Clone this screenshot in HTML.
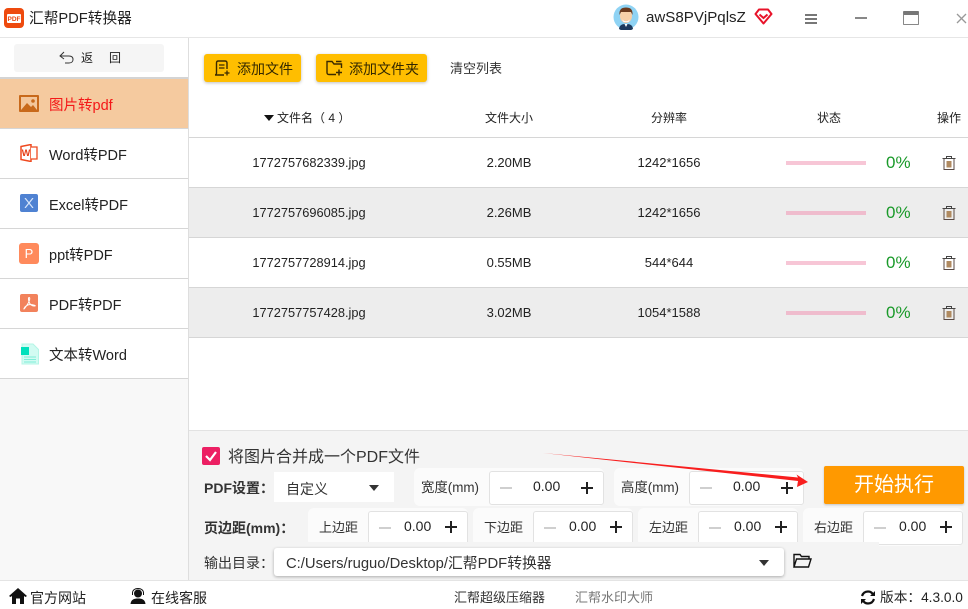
<!DOCTYPE html>
<html><head><meta charset="utf-8"><style>
*{box-sizing:border-box;margin:0;padding:0}
html,body{width:968px;height:609px;overflow:hidden;background:#fff}
body{position:relative;font-family:"Liberation Sans","Noto Sans CJK SC",sans-serif;color:#222;font-size:13px}
.a{position:absolute;white-space:nowrap}
.t{position:absolute;white-space:nowrap;line-height:20px;height:20px}
.c{text-align:center}
.nav{position:absolute;left:49px;font-size:14.5px;line-height:20px;white-space:nowrap}
.line{position:absolute;height:1px;background:#d6d6d6}
.box{position:absolute;background:#fff;border:1px solid #e2e2e2;border-radius:3px}
.wrap{position:absolute;background:#fbfbfb;border-radius:6px}
.val{position:absolute;font-size:14px;line-height:20px;white-space:nowrap;color:#222}
.minus{position:absolute;width:12px;height:2px;background:#cfcfcf}
.plus{position:absolute;width:12px;height:12px}
.plus:before{content:"";position:absolute;left:0;top:5px;width:12px;height:2px;background:#222}
.plus:after{content:"";position:absolute;left:5px;top:0;width:2px;height:12px;background:#222}
.bar{position:absolute;left:786px;width:80px;height:4px;background:#f7c6d6}
.pct{position:absolute;left:886px;font-size:17px;color:#1a9a2a;line-height:22px}
.fn{font-size:12.8px}
</style></head><body>
<!-- title bar -->
<svg class="a" style="left:4px;top:8px" width="20" height="20" viewBox="0 0 20 20"><rect width="20" height="20" rx="4" fill="#ee4a0e"/><rect x="3" y="6" width="14" height="9" rx="1" fill="#fff"/><text x="10" y="13" font-size="6.5" font-weight="bold" text-anchor="middle" fill="#e8430c" font-family="Liberation Sans">PDF</text></svg>
<div class="t" style="left:29px;top:9px;font-size:14.7px;color:#222">汇帮PDF转换器</div>
<svg class="a" style="left:613px;top:4px" width="26" height="26" viewBox="0 0 26 26"><circle cx="13" cy="13" r="12.5" fill="#8fd3f4"/><ellipse cx="13" cy="12" rx="6" ry="7" fill="#f6cfa8"/><path d="M6.5 11C6 5 9 3.5 13 3.5S20 5 19.5 11L18 8H8Z" fill="#6b3a1e"/><path d="M9 15.5Q13 19 17 15.5L15.500 18H10.500Z" fill="#fff"/><path d="M6 25C6.5 20.500 9.500 20 13 20s6.500.5 7 5a12.500 12.500 0 0 1-14 0Z" fill="#1d3a5e"/><path d="M11.500 20h3L13 23Z" fill="#fff"/></svg>
<div class="t" style="left:646px;top:8px;font-size:15.1px">awS8PVjPqlsZ</div>
<svg class="a" style="left:754px;top:8px" width="19" height="17" viewBox="0 0 19 17"><path d="M5 1.500H14L17.500 6 9.500 15.500 1.500 6Z" fill="#fff" stroke="#e8132a" stroke-width="2" stroke-linejoin="round"/><path d="M5.500 6.500 9.500 10 13.500 6.500" fill="none" stroke="#e8132a" stroke-width="2"/></svg>
<div class="a" style="left:805px;top:14px;width:12px;height:2px;background:#777"></div>
<div class="a" style="left:805px;top:18px;width:12px;height:2px;background:#777"></div>
<div class="a" style="left:805px;top:22px;width:12px;height:2px;background:#777"></div>
<div class="a" style="left:855px;top:17px;width:12px;height:2px;background:#888"></div>
<div class="a" style="left:903px;top:11px;width:16px;height:14px;border:1.500px solid #888;border-top:4px solid #777;border-radius:1px"></div>
<svg class="a" style="left:955px;top:12px" width="13" height="13"><path d="M2 2 11 11M11 2 2 11" stroke="#999" stroke-width="1.300"/></svg>
<div class="line" style="left:0;top:37px;width:968px;background:#e6e6e6"></div>

<!-- sidebar -->
<div class="a" style="left:0;top:38px;width:188px;height:542px;background:#f8f8f8"></div>
<div class="a" style="left:0;top:38px;width:188px;height:340px;background:#fff"></div>
<div class="a" style="left:188px;top:38px;width:1px;height:542px;background:#dedede"></div>
<div class="a" style="left:14px;top:44px;width:150px;height:28px;background:#f5f5f5;border-radius:3px"></div>
<svg class="a" style="left:59px;top:51px" width="15" height="13" viewBox="0 0 15 13"><path d="M5 1 1 5 5 8M1.500 5H10C13.500 5 14 7 14 8.500S13 12 10 12H6" fill="none" stroke="#333" stroke-width="1"/></svg>
<div class="t" style="left:81px;top:48px;font-size:12px">返</div>
<div class="t" style="left:109px;top:48px;font-size:12px">回</div>
<div class="a" style="left:0;top:77px;width:188px;height:2px;background:#d4d4d4"></div>
<div class="a" style="left:0;top:79px;width:188px;height:49px;background:#f5ca9f"></div>
<div class="line" style="left:0;top:128px;width:188px"></div>
<svg class="a" style="left:19px;top:95px" width="20" height="17" viewBox="0 0 20 17"><rect width="20" height="17" rx="1" fill="#c8691b"/><rect x="2" y="2" width="16" height="13" fill="#f3c69b"/><path d="M2 15 8 8 12 12 14 10 18 15Z" fill="#c8691b"/><circle cx="14" cy="6" r="1.800" fill="#c8691b"/></svg>
<div class="nav" style="top:96px;color:#f41818">图片转pdf</div>

<svg class="a" style="left:20px;top:144px" width="18" height="18" viewBox="0 0 18 18"><path d="M1 2.500 11 .5V17.500L1 15.500Z" fill="#fff" stroke="#ef4a20" stroke-width="1.500"/><path d="M11 3H17V15H11" fill="#fff" stroke="#ef4a20" stroke-width="1.300"/><text x="6" y="12" font-size="9" font-weight="bold" text-anchor="middle" fill="#e63c14" font-family="Liberation Sans">W</text></svg>
<div class="nav" style="top:146px">Word转PDF</div>
<div class="line" style="left:0;top:178px;width:188px"></div>

<div class="a" style="left:20px;top:194px;width:18px;height:18px;background:#4f82d2;border-radius:2px"></div>
<svg class="a" style="left:24px;top:198px" width="10" height="10"><path d="M1 0 9 10M9 0 1 10" stroke="#d8e6fa" stroke-width="1.200"/></svg>
<div class="nav" style="top:196px">Excel转PDF</div>
<div class="line" style="left:0;top:228px;width:188px"></div>

<div class="a" style="left:19px;top:243px;width:20px;height:21px;background:#ff8a5c;border-radius:3px;color:#fff;font-size:13px;line-height:21px;text-align:center">P</div>
<div class="nav" style="top:246px">ppt转PDF</div>
<div class="line" style="left:0;top:278px;width:188px"></div>

<div class="a" style="left:20px;top:294px;width:18px;height:18px;background:#f2825c;border-radius:2px"></div>
<svg class="a" style="left:22px;top:296px" width="14" height="14" viewBox="0 0 14 14"><path d="M7 1.500C6 1.500 6.500 5 7.500 7S10 10 12.500 10 11 8.500 8.500 8.500 3 10 2 12.500 6 8 7 5.500 8 1.500 7 1.500Z" fill="none" stroke="#fff" stroke-width="1"/></svg>
<div class="nav" style="top:296px">PDF转PDF</div>
<div class="line" style="left:0;top:328px;width:188px"></div>

<svg class="a" style="left:20px;top:343px" width="19" height="22" viewBox="0 0 19 22"><path d="M2 1H13L18.500 6.500V21H2Z" fill="#d2fbf2" stroke="#b4f5e6"/><rect x="1" y="4" width="8" height="8" fill="#00e0bc"/><path d="M4 14H16M4 16.500H16M4 19H16" stroke="#7feed8" stroke-width="1"/></svg>
<div class="nav" style="top:346px">文本转Word</div>
<div class="line" style="left:0;top:378px;width:188px"></div>

<!-- toolbar -->
<div class="a" style="left:204px;top:54px;width:97px;height:28px;background:#ffbe00;border-radius:3px;box-shadow:0 1px 3px rgba(0,0,0,.25)"></div>
<svg class="a" style="left:214px;top:60px" width="16" height="16" viewBox="0 0 16 16"><path d="M13 9V3Q13 1 11 1H4.500Q2.500 1 2.500 3V13Q2.500 15 1 15H10" fill="none" stroke="#3a2a00" stroke-width="1.400"/><path d="M5 5H10.500M5 8H10.500" stroke="#3a2a00" stroke-width="1.300"/><path d="M13 10.500V15.500M10.500 13H15.500" stroke="#3a2a00" stroke-width="1.300"/></svg>
<div class="t" style="left:237px;top:59px;font-size:14px;color:#332800">添加文件</div>
<div class="a" style="left:316px;top:54px;width:111px;height:28px;background:#ffbe00;border-radius:3px;box-shadow:0 1px 3px rgba(0,0,0,.25)"></div>
<svg class="a" style="left:326px;top:60px" width="17" height="16" viewBox="0 0 17 16"><path d="M10 14.500H3Q1 14.500 1 12.500V1.500H6L8 4H15.500V8M10 1.500H15.500" fill="none" stroke="#3a2a00" stroke-width="1.400"/><path d="M13 9.500V15.500M10 12.500H16" stroke="#3a2a00" stroke-width="1.500"/></svg>
<div class="t" style="left:349px;top:59px;font-size:14px;color:#332800">添加文件夹</div>
<div class="t" style="left:450px;top:59px;font-size:13px;color:#333">清空列表</div>

<!-- header -->
<svg class="a" style="left:264px;top:115px" width="10" height="6"><path d="M0 0H10L5 6Z" fill="#111"/></svg>
<div class="t" style="left:277px;top:108px;font-size:12px">文件名（ 4 ）</div>
<div class="t c" style="left:459px;width:100px;top:108px;font-size:12px">文件大小</div>
<div class="t c" style="left:619px;width:100px;top:108px;font-size:12px">分辨率</div>
<div class="t c" style="left:779px;width:100px;top:108px;font-size:12px">状态</div>
<div class="t c" style="left:919px;width:60px;top:108px;font-size:12px">操作</div>
<div class="line" style="left:189px;top:137px;width:779px"></div>

<!-- rows -->
<div class="a" style="left:189px;top:188px;width:779px;height:49px;background:#ededed"></div>
<div class="a" style="left:189px;top:288px;width:779px;height:49px;background:#ededed"></div>
<div class="line" style="left:189px;top:187px;width:779px"></div>
<div class="line" style="left:189px;top:237px;width:779px"></div>
<div class="line" style="left:189px;top:287px;width:779px"></div>
<div class="line" style="left:189px;top:337px;width:779px"></div>

<div class="t c fn" style="left:229px;width:160px;top:153px">1772757682339.jpg</div>
<div class="t c" style="left:459px;width:100px;top:153px;font-size:13px">2.20MB</div>
<div class="t c" style="left:619px;width:100px;top:153px;font-size:13px">1242*1656</div>
<div class="bar" style="top:161px"></div><div class="pct" style="top:152px">0%</div>

<div class="t c fn" style="left:229px;width:160px;top:203px">1772757696085.jpg</div>
<div class="t c" style="left:459px;width:100px;top:203px;font-size:13px">2.26MB</div>
<div class="t c" style="left:619px;width:100px;top:203px;font-size:13px">1242*1656</div>
<div class="bar" style="top:211px;background:#efbccd"></div><div class="pct" style="top:202px">0%</div>

<div class="t c fn" style="left:229px;width:160px;top:253px">1772757728914.jpg</div>
<div class="t c" style="left:459px;width:100px;top:253px;font-size:13px">0.55MB</div>
<div class="t c" style="left:619px;width:100px;top:253px;font-size:13px">544*644</div>
<div class="bar" style="top:261px"></div><div class="pct" style="top:252px">0%</div>

<div class="t c fn" style="left:229px;width:160px;top:303px">1772757757428.jpg</div>
<div class="t c" style="left:459px;width:100px;top:303px;font-size:13px">3.02MB</div>
<div class="t c" style="left:619px;width:100px;top:303px;font-size:13px">1054*1588</div>
<div class="bar" style="top:311px;background:#efbccd"></div><div class="pct" style="top:302px">0%</div>

<svg class="a" style="left:942px;top:156px" width="14" height="14" viewBox="0 0 14 14"><path d="M.5 2.500H13.500M4.500 2.500V.5H9.500V2.500" fill="none" stroke="#444" stroke-width="1"/><path d="M2 2.500V13.500H12V2.500" fill="none" stroke="#5a4a44" stroke-width="1"/><path d="M4.500 5H9.500V11.500H4.500Z" fill="#b08a60"/></svg>
<svg class="a" style="left:942px;top:206px" width="14" height="14" viewBox="0 0 14 14"><path d="M.5 2.500H13.500M4.500 2.500V.5H9.500V2.500" fill="none" stroke="#444" stroke-width="1"/><path d="M2 2.500V13.500H12V2.500" fill="none" stroke="#5a4a44" stroke-width="1"/><path d="M4.500 5H9.500V11.500H4.500Z" fill="#b08a60"/></svg>
<svg class="a" style="left:942px;top:256px" width="14" height="14" viewBox="0 0 14 14"><path d="M.5 2.500H13.500M4.500 2.500V.5H9.500V2.500" fill="none" stroke="#444" stroke-width="1"/><path d="M2 2.500V13.500H12V2.500" fill="none" stroke="#5a4a44" stroke-width="1"/><path d="M4.500 5H9.500V11.500H4.500Z" fill="#b08a60"/></svg>
<svg class="a" style="left:942px;top:306px" width="14" height="14" viewBox="0 0 14 14"><path d="M.5 2.500H13.500M4.500 2.500V.5H9.500V2.500" fill="none" stroke="#444" stroke-width="1"/><path d="M2 2.500V13.500H12V2.500" fill="none" stroke="#5a4a44" stroke-width="1"/><path d="M4.500 5H9.500V11.500H4.500Z" fill="#b08a60"/></svg>

<!-- bottom panel -->
<div class="a" style="left:189px;top:430px;width:779px;height:150px;background:#f4f4f4;border-top:1px solid #e2e2e2"></div>
<div class="a" style="left:202px;top:447px;width:18px;height:18px;background:#ec1f63;border-radius:2px"></div>
<svg class="a" style="left:204px;top:450px" width="14" height="12"><path d="M2 6 6 10 12 2" fill="none" stroke="#fff" stroke-width="2.200"/></svg>
<div class="t" style="left:228px;top:448px;font-size:16px;color:#333">将图片合并成一个PDF文件</div>

<div class="t" style="left:204px;top:478px;font-size:14px;font-weight:bold;color:#333">PDF设置：</div>
<div class="a" style="left:274px;top:472px;width:120px;height:30px;background:#fff"></div>
<div class="t" style="left:286px;top:479px;font-size:14px;color:#333">自定义</div>
<svg class="a" style="left:369px;top:485px" width="10" height="6"><path d="M0 0H10L5 6Z" fill="#333"/></svg>

<div class="wrap" style="left:414px;top:468px;width:190px;height:38px"></div>
<div class="t" style="left:421px;top:478px;font-size:13.400px;color:#333">宽度(mm)</div>
<div class="box" style="left:489px;top:471px;width:115px;height:34px"></div>
<div class="minus" style="left:500px;top:487px"></div>
<div class="val" style="left:533px;top:476px">0.00</div>
<div class="plus" style="left:581px;top:482px"></div>

<div class="wrap" style="left:614px;top:468px;width:190px;height:38px"></div>
<div class="t" style="left:621px;top:478px;font-size:13.400px;color:#333">高度(mm)</div>
<div class="box" style="left:689px;top:471px;width:115px;height:34px"></div>
<div class="minus" style="left:700px;top:487px"></div>
<div class="val" style="left:733px;top:476px">0.00</div>
<div class="plus" style="left:781px;top:482px"></div>

<div class="a" style="left:824px;top:466px;width:140px;height:38px;background:#ff9900;border-radius:2px;color:#fff;font-size:20px;line-height:38px;text-align:center;box-shadow:0 1px 2px rgba(0,0,0,.2)">开始执行</div>

<div class="t" style="left:204px;top:518px;font-size:14px;font-weight:bold;color:#333">页边距(mm)：</div>

<div class="wrap" style="left:308px;top:508px;width:160px;height:38px"></div>
<div class="t" style="left:319px;top:518px;font-size:13px;color:#333">上边距</div>
<div class="box" style="left:368px;top:511px;width:100px;height:34px"></div>
<div class="minus" style="left:379px;top:527px"></div>
<div class="val" style="left:404px;top:516px">0.00</div>
<div class="plus" style="left:445px;top:521px"></div>

<div class="wrap" style="left:473px;top:508px;width:160px;height:38px"></div>
<div class="t" style="left:484px;top:518px;font-size:13px;color:#333">下边距</div>
<div class="box" style="left:533px;top:511px;width:100px;height:34px"></div>
<div class="minus" style="left:544px;top:527px"></div>
<div class="val" style="left:569px;top:516px">0.00</div>
<div class="plus" style="left:610px;top:521px"></div>

<div class="wrap" style="left:638px;top:508px;width:160px;height:38px"></div>
<div class="t" style="left:649px;top:518px;font-size:13px;color:#333">左边距</div>
<div class="box" style="left:698px;top:511px;width:100px;height:34px"></div>
<div class="minus" style="left:709px;top:527px"></div>
<div class="val" style="left:734px;top:516px">0.00</div>
<div class="plus" style="left:775px;top:521px"></div>

<div class="wrap" style="left:803px;top:508px;width:160px;height:38px"></div>
<div class="t" style="left:814px;top:518px;font-size:13px;color:#333">右边距</div>
<div class="box" style="left:863px;top:511px;width:100px;height:34px"></div>
<div class="minus" style="left:874px;top:527px"></div>
<div class="val" style="left:899px;top:516px">0.00</div>
<div class="plus" style="left:940px;top:521px"></div>

<div class="a" style="left:189px;top:542px;width:690px;height:38px;background:#f4f4f4"></div>

<div class="t" style="left:204px;top:553px;font-size:14px;color:#333">输出目录：</div>
<div class="a" style="left:274px;top:548px;width:510px;height:28px;background:#fff;border-radius:3px;box-shadow:0 1px 3px rgba(0,0,0,.3)"></div>
<div class="t" style="left:286px;top:554px;font-size:14.800px;color:#333">C:/Users/ruguo/Desktop/汇帮PDF转换器</div>
<svg class="a" style="left:759px;top:560px" width="10" height="6"><path d="M0 0H10L5 6Z" fill="#333"/></svg>
<svg class="a" style="left:793px;top:553px" width="19" height="15" viewBox="0 0 19 15"><path d="M1 14V1.500H7L8.500 3.500H16V6M1 14H15.500L18 6H3.500L1 14Z" fill="none" stroke="#111" stroke-width="1.400"/></svg>

<!-- arrow -->
<svg class="a" style="left:540px;top:450px" width="270" height="50" viewBox="0 0 270 50"><path d="M3 3 258 27.500 256.500 24.500 268 32 257 37 258 31Z" fill="#f81e1e"/></svg>

<!-- footer -->
<div class="line" style="left:0;top:580px;width:968px;background:#e4e4e4"></div>
<svg class="a" style="left:9px;top:588px" width="18" height="16" viewBox="0 0 18 16"><path d="M9 0 18 8 16.500 9 15 8V16H11V10.500H7V16H3V8L1.500 9 0 8Z" fill="#111"/></svg>
<div class="t" style="left:30px;top:588px;font-size:14px">官方网站</div>
<svg class="a" style="left:130px;top:588px" width="16" height="16" viewBox="0 0 16 16"><circle cx="8" cy="5.500" r="4" fill="#111"/><path d="M2.500 7V5C2.500 2 5 .5 8 .5S13.500 2 13.500 5V7" fill="none" stroke="#111"/><path d="M0.500 16C1 11.500 4 10.500 8 10.500S15 11.500 15.500 16Z" fill="#111"/></svg>
<div class="t" style="left:151px;top:588px;font-size:14px">在线客服</div>
<div class="t" style="left:454px;top:588px;font-size:13px;color:#333">汇帮超级压缩器</div>
<div class="t" style="left:575px;top:588px;font-size:13px;color:#777">汇帮水印大师</div>
<svg class="a" style="left:860px;top:590px" width="16" height="15" viewBox="0 0 16 15"><path d="M2 6C3 3 5 1.500 8 1.500S12 3 13 4.500M14 9C13 12 11 13.500 8 13.500S4 12 3 10.500" fill="none" stroke="#111" stroke-width="2.200"/><path d="M15 1V6H10ZM1 14V9H6Z" fill="#111"/></svg>
<div class="t" style="left:880px;top:588px;font-size:13.700px">版本：4.3.0.0</div>
</body></html>
